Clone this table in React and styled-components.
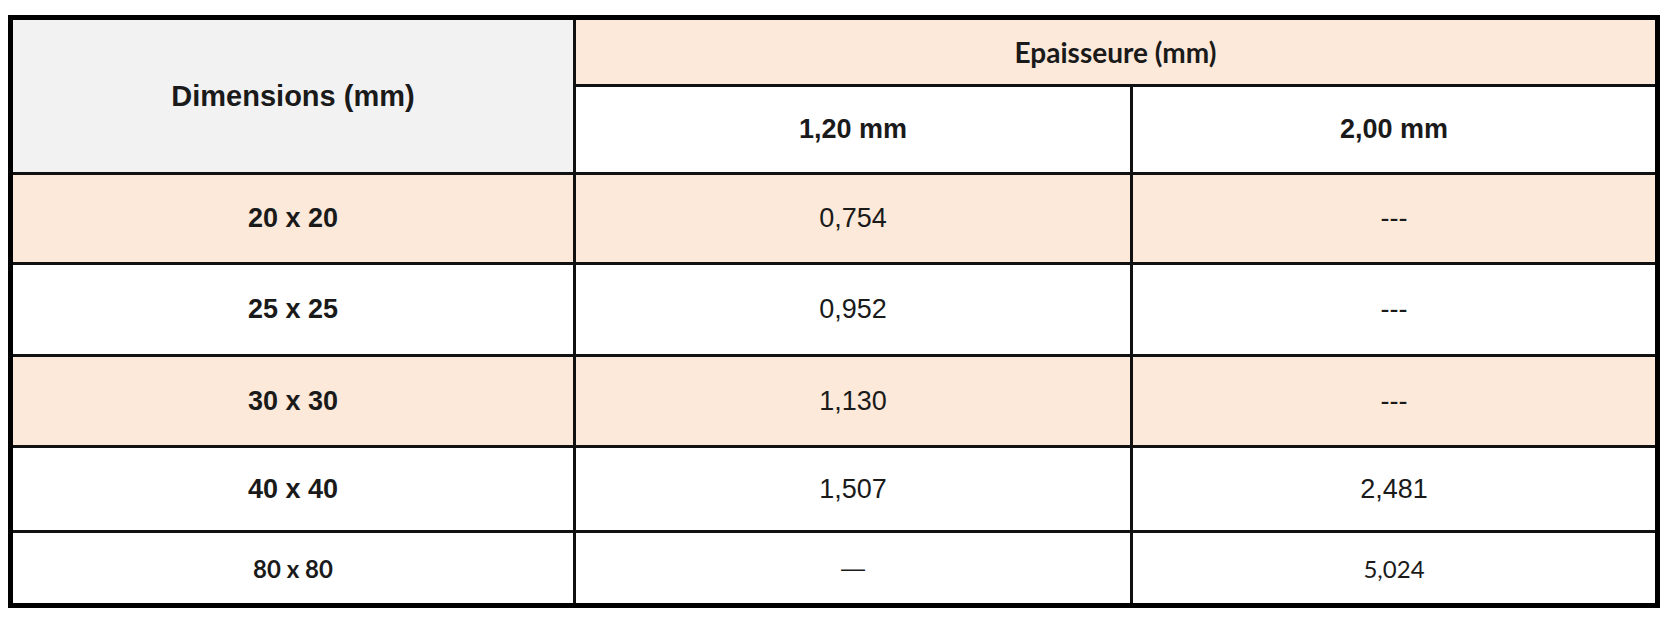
import React from 'react';
import styled, { createGlobalStyle } from 'styled-components';

const GlobalStyle = createGlobalStyle`
    html, body {
        margin: 0;
        padding: 0;
        background: #ffffff;
    }
    body {
        font-family: "Liberation Sans", Arial, sans-serif;
        color: #1a1a1a;
    }
`

const Page = styled.div`
    padding: 15px 14px 0 8px;
`

const Table = styled.table`
    border-collapse: collapse;
    table-layout: fixed;
    width: 1652px;
    border: 5px solid #000;
`

const Row = styled.tr`
    height: ${props => props.h}px;
    background: ${props => (props.shaded ? '#fde9d9' : '#ffffff')};
`

const Cell = styled.td`
    border: 3px solid #111;
    padding: 0;
    text-align: center;
    vertical-align: middle;
    font-family: ${props => (props.calibri ? '"Lato", "Open Sans", sans-serif' : '"Liberation Sans", Arial, sans-serif')};
    font-size: ${props => props.size || 27}px;
    font-weight: ${props => (props.bold ? 700 : 400)};
    background: ${props => props.bg || 'transparent'};
`

const rows = [
    { dim: '20 x 20', a: '0,754', b: '---', h: 90, shaded: true },
    { dim: '25 x 25', a: '0,952', b: '---', h: 92, shaded: false },
    { dim: '30 x 30', a: '1,130', b: '---', h: 91, shaded: true },
    { dim: '40 x 40', a: '1,507', b: '2,481', h: 85, shaded: false },
    { dim: '80 x 80', a: '—', b: '5,024', h: 74, shaded: false, calibri: true },
]

const App = () => {
    return (
        <Page>
            <GlobalStyle />
            <Table>
                <colgroup>
                    <col style={{ width: 564 }} />
                    <col style={{ width: 557 }} />
                    <col style={{ width: 526 }} />
                </colgroup>
                <tbody>
                    <Row h={68}>
                        <Cell rowSpan={2} bold size={29} bg="#f2f2f2">Dimensions (mm)</Cell>
                        <Cell colSpan={2} bold calibri size={28} bg="#fde9d9">Epaisseure (mm)</Cell>
                    </Row>
                    <Row h={88}>
                        <Cell bold>1,20 mm</Cell>
                        <Cell bold>2,00 mm</Cell>
                    </Row>
                    {rows.map(r => (
                        <Row key={r.dim} h={r.h} shaded={r.shaded}>
                            <Cell bold size={r.calibri ? 24 : 27} calibri={r.calibri}>{r.dim}</Cell>
                            <Cell size={r.calibri ? 24 : 27}>{r.a}</Cell>
                            <Cell size={r.calibri ? 24 : 27} calibri={r.calibri}>{r.b}</Cell>
                        </Row>
                    ))}
                </tbody>
            </Table>
        </Page>
    )
}

export default App;
